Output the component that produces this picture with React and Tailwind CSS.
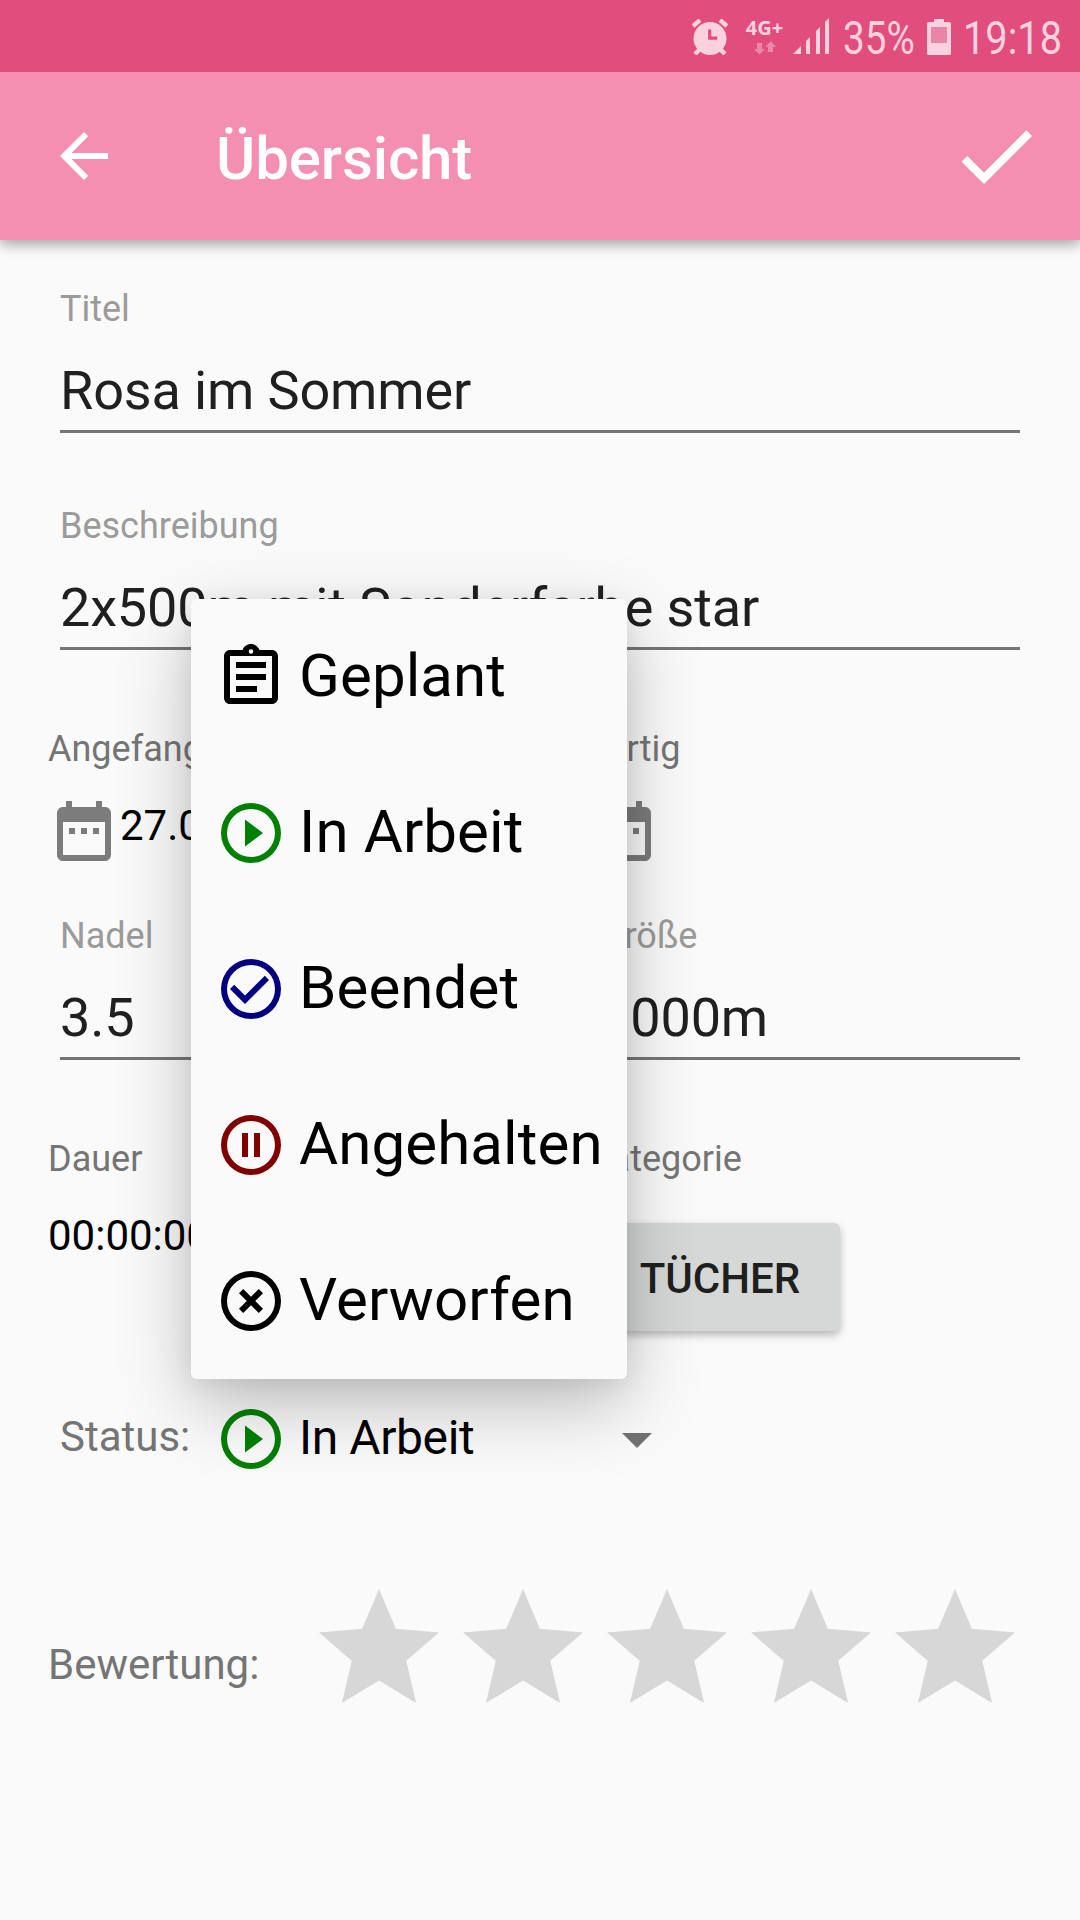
import React from "react";

const ICONS = {
  planned:
    "M7 15h7v2H7zM7 11h10v2H7zM7 7h10v2H7zM19 3h-4.18C14.4 1.84 13.3 1 12 1s-2.4.84-2.82 2H5c-1.1 0-2 .9-2 2v14c0 1.1.9 2 2 2h14c1.1 0 2-.9 2-2V5c0-1.1-.9-2-2-2zM12 2.75a.75.75 0 1 1 0 1.5.75.75 0 0 1 0-1.5zM19 19H5V5h14z",
  play: "M10 16.5l6-4.5-6-4.5zM12 2a10 10 0 1 0 0 20 10 10 0 0 0 0-20zm0 18a8 8 0 1 1 0-16 8 8 0 0 1 0 16z",
  done: "M16.59 7.58L10 14.17l-3.59-3.58L5 12l5 5 8-8zM12 2a10 10 0 1 0 0 20 10 10 0 0 0 0-20zm0 18a8 8 0 1 1 0-16 8 8 0 0 1 0 16z",
  pause: "M9 16h2V8H9zM13 16h2V8h-2zM12 2a10 10 0 1 0 0 20 10 10 0 0 0 0-20zm0 18a8 8 0 1 1 0-16 8 8 0 0 1 0 16z",
  discard:
    "M14.59 8L12 10.59 9.41 8 8 9.41 10.59 12 8 14.59 9.41 16 12 13.41 14.59 16 16 14.59 13.41 12 16 9.41zM12 2a10 10 0 1 0 0 20 10 10 0 0 0 0-20zm0 18a8 8 0 1 1 0-16 8 8 0 0 1 0 16z",
  calendar:
    "M9 11H7v2h2zM13 11h-2v2h2zM17 11h-2v2h2zM19 4h-1V2h-2v2H8V2H6v2H5c-1.1 0-2 .9-2 2v14c0 1.1.9 2 2 2h14c1.1 0 2-.9 2-2V6c0-1.1-.9-2-2-2zm0 16H5V9h14z",
  star: "M12 17.27L18.18 21l-1.64-7.03L22 9.24l-7.19-.61L12 2 9.19 8.63 2 9.24l5.46 4.73L5.82 21z",
  back: "M20 11H7.83l5.59-5.59L12 4l-8 8 8 8 1.41-1.41L7.83 13H20z",
  check: "M9 16.17L4.83 12l-1.42 1.41L9 19 21 7l-1.41-1.41z",
};

function Icon({ name, className }) {
  return (
    <svg viewBox="0 0 24 24" fill="currentColor" fillRule="evenodd" className={`shrink-0 ${className}`}>
      <path d={ICONS[name]} />
    </svg>
  );
}

const STATUSES = [
  { icon: "planned", label: "Geplant", color: "text-black" },
  { icon: "play", label: "In Arbeit", color: "text-[#008000]" },
  { icon: "done", label: "Beendet", color: "text-[#000080]" },
  { icon: "pause", label: "Angehalten", color: "text-[#800000]" },
  { icon: "discard", label: "Verworfen", color: "text-black" },
];

function StatusBar() {
  return (
    <div className="relative z-10 flex h-[72px] items-start justify-end bg-[#e14d7d] pr-[19px] text-[#fad1de]">
      <svg viewBox="0 0 36 36" className="mt-[19px] size-9" fill="currentColor">
        <circle cx="18" cy="19.5" r="16.5" />
        <path d="M1 7L8 1M28 1l7 6M7 31l-4 4M29 31l4 4" stroke="currentColor" strokeWidth="4.4" />
        <path d="M17.7 10.500v8.700h7.500" stroke="#e14d7d" strokeWidth="3.200" fill="none" />
      </svg>
      <div className="ml-[17px] mt-[16px] flex w-[39px] flex-col items-center">
        <span className="font-['Open_Sans'] text-[20px] leading-6 font-bold">4G+</span>
        <svg viewBox="0 0 22 14" className="mt-[1px] h-[14px] w-[22px] text-[#ee86a9]" fill="currentColor">
          <path d="M3 2h5v6h3L5.500 13.500 0 8h3zM14 11h5V6h3L16.800 0 11.500 6H14z" />
        </svg>
      </div>
      <svg viewBox="0 0 36 36" className="ml-[9px] mt-[18px] size-9" fill="currentColor">
        <path d="M0 36l8-8v8zM13 36V23l4-4v17zM23 36V13l4-4v27zM32 36V4l4-4v36z" />
      </svg>
      <span className="ml-[14px] mt-[11px] w-[73px] origin-left scale-x-[0.84] whitespace-nowrap text-[46px] leading-[54px]">35%</span>
      <svg viewBox="0 0 24 36" className="ml-[11px] mt-[19px] h-9 w-6" fill="currentColor">
        <path d="M7 0h10v3h5.500a1.500 1.500 0 0 1 1.500 1.500V34.500a1.500 1.500 0 0 1-1.500 1.500H1.500A1.500 1.500 0 0 1 0 34.500V4.500A1.500 1.500 0 0 1 1.500 3H7z" />
        <path d="M4 8h16v16H4z" fill="#e985a6" />
      </svg>
      <span className="ml-[12px] mt-[11px] w-[98px] origin-left scale-x-[0.865] whitespace-nowrap text-[46px] leading-[54px]">19:18</span>
    </div>
  );
}

function AppBar() {
  return (
    <header className="relative flex h-[168px] items-start bg-[#f48fb1] text-white shadow-[0_5px_12px_rgba(0,0,0,0.33)]">
      <Icon name="back" className="mt-12 ml-12 size-[72px]" />
      <h1 className="mt-[47px] ml-24 grow text-[60px] leading-[80px] font-medium tracking-[-0.1px]">Übersicht</h1>
      <Icon name="check" className="mt-9 mr-9 size-24" />
    </header>
  );
}

function Field({ label, value }) {
  return (
    <div className="flex grow basis-0 flex-col">
      <label className="h-12 text-[36px] leading-[48px] text-[#9b9b9b]">{label}</label>
      <div className="mt-[22px] border-b-[3px] border-[#757575] pb-[3px] text-[54px] leading-[72px] tracking-[-0.14px] text-[#202020]">{value}</div>
    </div>
  );
}

function Caption({ children }) {
  return <div className="text-[36px] leading-[48px] text-[#757575]">{children}</div>;
}

function DateCell({ label, date }) {
  return (
    <div>
      <Caption>{label}</Caption>
      <div className="mt-[22px] flex h-[72px] items-start">
        <Icon name="calendar" className="size-[72px] text-[#7c7c7c]" />
        <span className="mt-[3px] text-[42px] leading-[56px]">{date}</span>
      </div>
    </div>
  );
}

function StatusMenu() {
  return (
    <ul className="absolute bottom-full -left-6 z-10 mb-6 w-[436px] rounded-[6px] bg-[#fafafa] shadow-[0_26px_72px_rgba(0,0,0,0.25),0_4px_24px_rgba(0,0,0,0.07)]">
      {STATUSES.map((s) => (
        <li key={s.label} className="flex h-[156px] items-center gap-3 pl-6">
          <Icon name={s.icon} className={`size-[72px] ${s.color}`} />
          <span className="pb-[2px] text-[60px] leading-[80px] tracking-[0.1px]">{s.label}</span>
        </li>
      ))}
    </ul>
  );
}

export default function App() {
  return (
    <div className="h-[1920px] w-[1080px] overflow-hidden bg-[#fafafa] font-[Roboto,sans-serif] text-black">
      <StatusBar />
      <AppBar />
      <main className="pt-[45px]">
        <div className="flex flex-col gap-[69px] px-[60px]">
          <Field label="Titel" value="Rosa im Sommer" />
          <Field label="Beschreibung" value="2x500m mit Sonderfarbe star" />
        </div>

        <div className="mt-[75px] grid grid-cols-[540px_1fr] pl-12">
          <DateCell label="Angefangen" date="27.06.2018" />
          <DateCell label="Fertig" date="" />
        </div>

        <div className="mt-[45px] flex gap-[120px] px-[60px]">
          <Field label="Nadel" value="3.5" />
          <Field label="Größe" value="1000m" />
        </div>

        <div className="mt-[75px] grid grid-cols-[540px_1fr] pl-12">
          <div>
            <Caption>Dauer</Caption>
            <div className="mt-[25px] text-[42px] leading-[56px]">00:00:00</div>
          </div>
          <div>
            <Caption>Kategorie</Caption>
            <button className="mt-10 ml-3 block h-[108px] w-[240px] rounded-[6px] bg-[#d6d7d7] pt-[4px] text-[42px] leading-[56px] font-medium text-[#1f1f1f] shadow-[0_4px_8px_rgba(0,0,0,0.28)]">
              TÜCHER
            </button>
          </div>
        </div>

        <div className="mt-[72px] flex h-[72px] items-start pl-[60px]">
          <span className="mt-[6px] w-[155px] text-[42px] leading-[56px] text-[#757575]">Status:</span>
          <div className="relative flex w-[448px] items-start gap-3">
            <StatusMenu />
            <Icon name="play" className="size-[72px] text-[#008000]" />
            <span className="mt-[3px] grow text-[48px] leading-[64px] tracking-[-0.4px]">In Arbeit</span>
            <svg viewBox="0 0 30 15" className="mt-[30px] mr-[11px] h-[15px] w-[30px] text-[#727272]" fill="currentColor">
              <path d="M0 0h30L15 15z" />
            </svg>
          </div>
        </div>

        <div className="mt-[102px] flex items-start pl-12">
          <span className="mt-[60px] w-[259px] text-[42px] leading-[56px] text-[#757575]">Bewertung:</span>
          {[1, 2, 3, 4, 5].map((n) => (
            <Icon key={n} name="star" className="size-36 text-[#d7d7d7]" />
          ))}
        </div>
      </main>
    </div>
  );
}
